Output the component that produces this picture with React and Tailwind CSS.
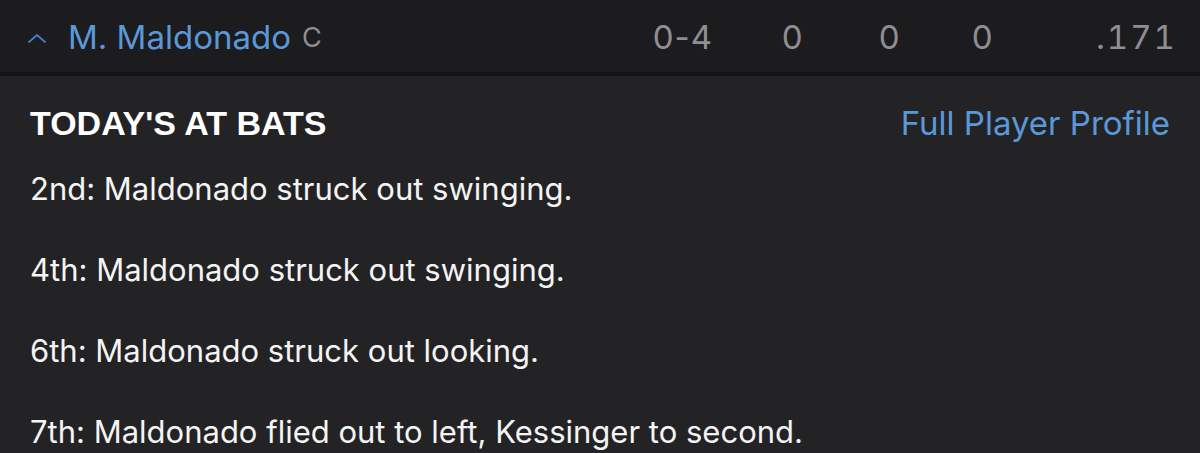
import React from 'react';

const atBats = [
  '2nd: Maldonado struck out swinging.',
  '4th: Maldonado struck out swinging.',
  '6th: Maldonado struck out looking.',
  '7th: Maldonado flied out to left, Kessinger to second.',
];

const ChevronUp = () => (
  <svg width="20" height="12" viewBox="0 0 20 12" fill="none">
    <path d="M2 10 L10 3 L18 10" stroke="#4280c4" strokeWidth="1.8" strokeLinecap="round" strokeLinejoin="round" />
  </svg>
);

const App = () => {
  return (
    <div className="w-[1200px] h-[453px] overflow-hidden bg-[#232325]" style={{ fontFamily: 'Inter, "Noto Sans", sans-serif' }}>
      {/* player row */}
      <div className="h-[76px] pt-[4px] flex items-center bg-[#1c1c1e] border-b-4 border-[#151517]">
        <div className="flex items-center pl-[27px]">
          <ChevronUp />
          <span className="ml-[21px] text-[33px] text-[#5b98d8]">M. Maldonado</span>
          <span className="ml-[11px] text-[27px] text-[#8e8e93]">C</span>
        </div>
        <div className="ml-auto flex items-center text-[33px] text-[#8e8e93] pr-[23px]">
          <span className="w-[80px] text-right tracking-[1px]">0-4</span>
          <span className="w-[90px] text-right tabular-nums">0</span>
          <span className="w-[97px] text-right tabular-nums">0</span>
          <span className="w-[93px] text-right tabular-nums">0</span>
          <span className="w-[184px] text-right tabular-nums tracking-[2px]">.171</span>
        </div>
      </div>

      {/* at bats */}
      <div className="px-[30px] pt-[27px]">
        <div className="flex items-baseline justify-between h-[40px]">
          <h2 className="text-[34px] leading-[40px] font-bold text-white" style={{ fontFamily: '"Liberation Sans", Arial, sans-serif' }}>
            TODAY'S AT BATS
          </h2>
          <span className="text-[33px] leading-[40px] text-[#5b98d8]">Full Player Profile</span>
        </div>
        <div className="mt-[28px] flex flex-col gap-[45px]">
          {atBats.map((line) => (
            <p key={line} className="text-[31px] leading-[36px] text-[#f4f4f4]">{line}</p>
          ))}
        </div>
      </div>
    </div>
  );
};

export default App;
